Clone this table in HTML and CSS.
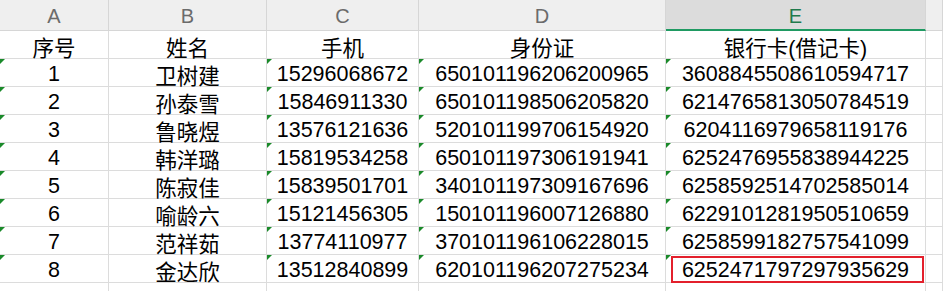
FILE: index.html
```html
<!DOCTYPE html>
<html lang="zh">
<head>
<meta charset="utf-8">
<link rel="stylesheet" href="styles.css">
</head>
<body>
<div class="sheet">
  <div class="hd">A</div><div class="hd">B</div><div class="hd">C</div><div class="hd">D</div><div class="hd sel">E</div><div class="hd"></div>

  <div class="c">序号</div><div class="c">姓名</div><div class="c">手机</div><div class="c">身份证</div><div class="c">银行卡(借记卡)</div><div class="c"></div>

  <div class="c t">1</div><div class="c">卫树建</div><div class="c t">15296068672</div><div class="c t">650101196206200965</div><div class="c t">3608845508610594717</div><div class="c"></div>
  <div class="c t">2</div><div class="c">孙泰雪</div><div class="c t">15846911330</div><div class="c t">650101198506205820</div><div class="c t">6214765813050784519</div><div class="c"></div>
  <div class="c t">3</div><div class="c">鲁晓煜</div><div class="c t">13576121636</div><div class="c t">520101199706154920</div><div class="c t">6204116979658119176</div><div class="c"></div>
  <div class="c t">4</div><div class="c">韩洋璐</div><div class="c t">15819534258</div><div class="c t">650101197306191941</div><div class="c t">6252476955838944225</div><div class="c"></div>
  <div class="c t">5</div><div class="c">陈寂佳</div><div class="c t">15839501701</div><div class="c t">340101197309167696</div><div class="c t">6258592514702585014</div><div class="c"></div>
  <div class="c t">6</div><div class="c">喻龄六</div><div class="c t">15121456305</div><div class="c t">150101196007126880</div><div class="c t">6229101281950510659</div><div class="c"></div>
  <div class="c t">7</div><div class="c">范祥茹</div><div class="c t">13774110977</div><div class="c t">370101196106228015</div><div class="c t">6258599182757541099</div><div class="c"></div>
  <div class="c t">8</div><div class="c">金达欣</div><div class="c t">13512840899</div><div class="c t">620101196207275234</div><div class="c t mark">6252471797297935629</div><div class="c"></div>

  <div class="c"></div><div class="c"></div><div class="c"></div><div class="c"></div><div class="c"></div><div class="c"></div>
</div>
</body>
</html>
```
FILE: styles.css
```css
html, body {
  margin: 0;
  padding: 0;
  background: #ffffff;
  overflow: hidden;
}
.sheet {
  display: grid;
  grid-template-columns: 109px 158px 152px 247px 260px 1fr;
  grid-template-rows: 31px repeat(10, 28px);
  width: 943px;
  font-family: "Liberation Sans", "Noto Sans CJK SC", sans-serif;
}
.hd {
  box-sizing: border-box;
  background: #efefef;
  border-right: 1px solid #d6d6d6;
  border-bottom: 1px solid #d6d6d6;
  color: #6b6b6b;
  font-size: 20px;
  display: flex;
  align-items: center;
  justify-content: center;
  padding-top: 2px;
}
.hd.sel {
  background: #dcdcdc;
  color: #1f7a4c;
  border-bottom: 2px solid #1f9a62;
  padding-top: 3px;
}
.c {
  position: relative;
  box-sizing: border-box;
  border-right: 1px solid #dcdcdc;
  border-bottom: 1px solid #dcdcdc;
  font-size: 21.5px;
  color: #000;
  display: flex;
  align-items: center;
  justify-content: center;
  padding-top: 3px;
  white-space: nowrap;
}
.t::before {
  content: "";
  position: absolute;
  left: 0;
  top: 0;
  border-top: 5px solid #1a8a2a;
  border-right: 5px solid transparent;
}
.mark::after {
  content: "";
  position: absolute;
  left: 5px;
  top: 1px;
  right: 1px;
  bottom: -1px;
  border: 2px solid #e3202c;
}
```
